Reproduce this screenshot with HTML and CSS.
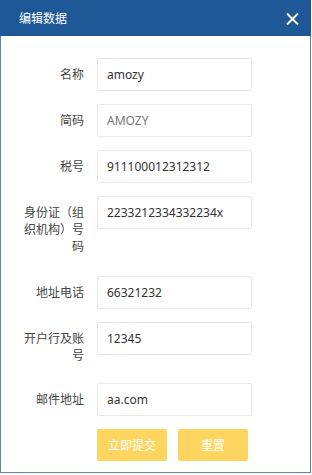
FILE: index.html
```html
<!DOCTYPE html>
<html lang="zh-CN">
<head>
    <meta charset="UTF-8">
    <meta name="viewport" content="width=device-width, initial-scale=1.0">
    <title>编辑数据</title>
    <link rel="stylesheet" href="styles.css">
</head>
<body>
    <div class="layer">
        <div class="layer-title">
            <span>编辑数据</span>
            <span class="layer-close">
                <svg width="13" height="12" viewBox="0 0 13 12">
                    <path d="M1 0.5 L12 11.5 M12 0.5 L1 11.5" stroke="#fff" stroke-width="2" fill="none"/>
                </svg>
            </span>
        </div>
        <form class="form">
            <div class="form-item">
                <label class="form-label">名称</label>
                <input class="input" type="text" value="amozy">
            </div>
            <div class="form-item">
                <label class="form-label">简码</label>
                <input class="input muted" type="text" value="AMOZY">
            </div>
            <div class="form-item">
                <label class="form-label">税号</label>
                <input class="input" type="text" value="911100012312312">
            </div>
            <div class="form-item">
                <label class="form-label">身份证（组织机构）号码</label>
                <input class="input" type="text" value="2233212334332234x">
            </div>
            <div class="form-item">
                <label class="form-label">地址电话</label>
                <input class="input" type="text" value="66321232">
            </div>
            <div class="form-item">
                <label class="form-label">开户行及账号</label>
                <input class="input" type="text" value="12345">
            </div>
            <div class="form-item">
                <label class="form-label">邮件地址</label>
                <input class="input" type="text" value="aa.com">
            </div>
            <div class="form-actions">
                <button class="btn" type="button">立即提交</button>
                <button class="btn" type="reset">重置</button>
            </div>
        </form>
    </div>
</body>
</html>
```

FILE: styles.css
```css
body {
    margin: 0;
    font-family: "Noto Sans", "Noto Sans CJK SC", sans-serif;
    font-size: 12px;
    color: #333;
    background-color: #fff;
}
.layer {
    width: 311px;
    height: 473px;
    box-sizing: border-box;
    border: 1px solid #5686b8;
    border-top: none;
    background-color: #fff;
}
.layer-title {
    height: 36px;
    margin: 0 -1px;
    padding: 0 12px 0 19px;
    display: flex;
    align-items: center;
    justify-content: space-between;
    background-color: #1f5896;
    color: #fff;
    font-size: 12px;
}
.layer-close {
    display: flex;
    padding-top: 1px;
}
.form {
    padding-top: 22px;
}
.form-item {
    display: flex;
    align-items: flex-start;
    margin-bottom: 13px;
}
.form-item:nth-child(7) {
    margin-top: -2px;
}
.form-label {
    width: 96px;
    box-sizing: border-box;
    padding: 8px 13px 8px 15px;
    line-height: 17px;
    text-align: right;
    color: #444;
}
.input {
    width: 155px;
    height: 33px;
    box-sizing: border-box;
    margin: 0;
    padding: 0 9px;
    border: 1px solid #e8e8e8;
    border-radius: 2px;
    font-family: inherit;
    font-size: 12px;
    color: #333;
    background-color: #fff;
    outline: none;
}
.input.muted {
    color: #777;
}
.form-actions {
    display: flex;
    gap: 11px;
    padding-left: 96px;
}
.btn {
    height: 32px;
    width: 70px;
    padding: 0;
    border: none;
    border-radius: 2px;
    background-color: #fdd55f;
    color: #fff;
    font-family: inherit;
    font-size: 12px;
}
```
